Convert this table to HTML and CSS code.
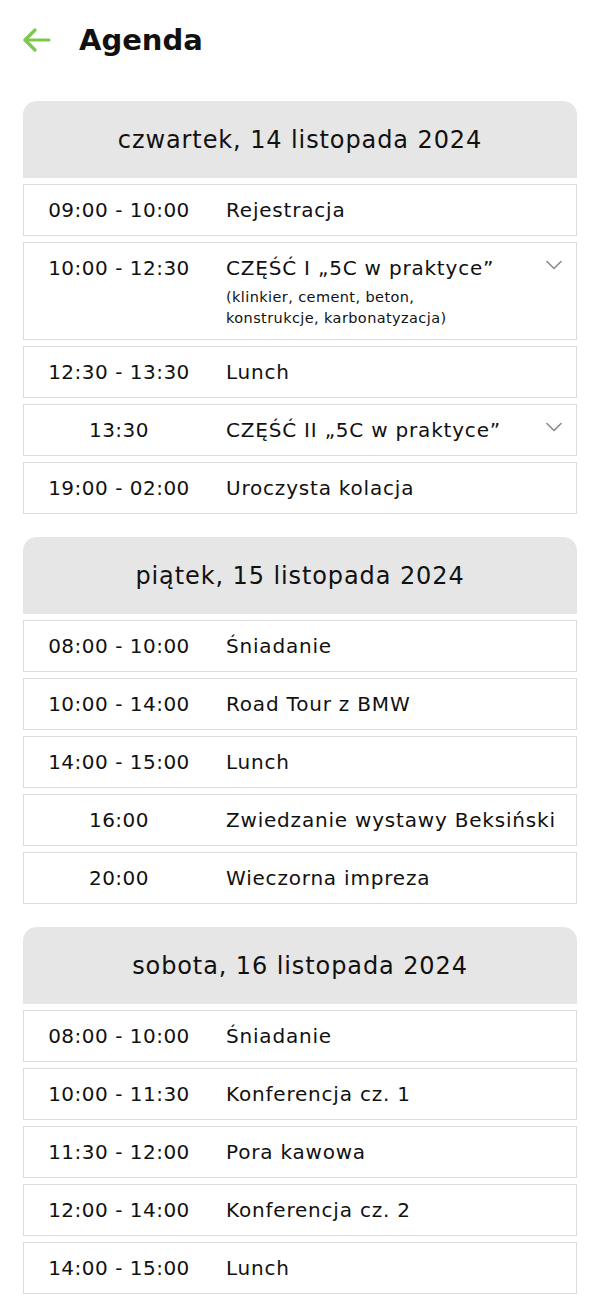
FILE: index.html
```html
<!DOCTYPE html>
<html lang="pl">
<head>
  <meta charset="UTF-8">
  <title>Agenda</title>
  <meta name="viewport" content="width=device-width, initial-scale=1.0">
  <link rel="stylesheet" href="styles.css">
</head>
<body>
  <header class="topbar">
    <a class="back" href="#" aria-label="Wstecz">
      <svg width="30" height="26" viewBox="0 0 30 26" fill="none" stroke="#7cc84f" stroke-width="3.2" stroke-linecap="round" stroke-linejoin="round">
        <path d="M27 13H3"/>
        <path d="M13 3L3 13l10 10"/>
      </svg>
    </a>
    <h1>Agenda</h1>
  </header>

  <main class="agenda">
    <section class="day">
      <h2 class="day-title">czwartek, 14 listopada 2024</h2>
      <div class="item"><span class="time">09:00 - 10:00</span><span class="what">Rejestracja</span></div>
      <div class="item has-more">
        <span class="time">10:00 - 12:30</span>
        <span class="what">CZĘŚĆ I „5C w praktyce”
          <small>(klinkier, cement, beton,<br>konstrukcje, karbonatyzacja)</small>
        </span>
        <svg class="chev" width="16" height="10" viewBox="0 0 16 10" fill="none" stroke="#8a8a8a" stroke-width="1.6" stroke-linecap="round" stroke-linejoin="round"><path d="M1 1.5l7 7 7-7"/></svg>
      </div>
      <div class="item"><span class="time">12:30 - 13:30</span><span class="what">Lunch</span></div>
      <div class="item has-more">
        <span class="time">13:30</span>
        <span class="what">CZĘŚĆ II „5C w praktyce”</span>
        <svg class="chev" width="16" height="10" viewBox="0 0 16 10" fill="none" stroke="#8a8a8a" stroke-width="1.6" stroke-linecap="round" stroke-linejoin="round"><path d="M1 1.5l7 7 7-7"/></svg>
      </div>
      <div class="item"><span class="time">19:00 - 02:00</span><span class="what">Uroczysta kolacja</span></div>
    </section>

    <section class="day">
      <h2 class="day-title">piątek, 15 listopada 2024</h2>
      <div class="item"><span class="time">08:00 - 10:00</span><span class="what">Śniadanie</span></div>
      <div class="item"><span class="time">10:00 - 14:00</span><span class="what">Road Tour z BMW</span></div>
      <div class="item"><span class="time">14:00 - 15:00</span><span class="what">Lunch</span></div>
      <div class="item"><span class="time">16:00</span><span class="what">Zwiedzanie wystawy Beksiński</span></div>
      <div class="item"><span class="time">20:00</span><span class="what">Wieczorna impreza</span></div>
    </section>

    <section class="day">
      <h2 class="day-title">sobota, 16 listopada 2024</h2>
      <div class="item"><span class="time">08:00 - 10:00</span><span class="what">Śniadanie</span></div>
      <div class="item"><span class="time">10:00 - 11:30</span><span class="what">Konferencja cz. 1</span></div>
      <div class="item"><span class="time">11:30 - 12:00</span><span class="what">Pora kawowa</span></div>
      <div class="item"><span class="time">12:00 - 14:00</span><span class="what">Konferencja cz. 2</span></div>
      <div class="item"><span class="time">14:00 - 15:00</span><span class="what">Lunch</span></div>
    </section>
  </main>
</body>
</html>
```

FILE: styles.css
```css
body {
  margin: 0;
  background: #fff;
  color: #111;
  font-family: 'DejaVu Sans', 'Noto Sans', Arial, sans-serif;
}
.topbar {
  display: flex;
  align-items: center;
  height: 80px;
  padding: 0 22px;
  box-sizing: border-box;
}
.back {
  display: flex;
  width: 30px;
  margin-right: 27px;
}
.topbar h1 {
  margin: 0;
  font-size: 29px;
  font-weight: 600;
  color: #111;
}
.agenda {
  padding: 21px 23px 0 23px;
}
.day {
  display: flex;
  flex-direction: column;
  gap: 6px;
  margin-bottom: 23px;
}
.day-title {
  margin: 0;
  height: 77px;
  display: flex;
  align-items: center;
  justify-content: center;
  background: #e6e6e6;
  border-radius: 14px 14px 0 0;
  font-size: 24px;
  font-weight: 400;
  letter-spacing: 0.9px;
  color: #111;
}
.item {
  display: flex;
  align-items: flex-start;
  min-height: 52px;
  box-sizing: border-box;
  border: 1.5px solid #dcdcdc;
  padding: 13px 0 10px 0;
  font-size: 20px;
  line-height: 24px;
  letter-spacing: 0.8px;
  position: relative;
}
.time {
  flex: 0 0 190px;
  text-align: center;
  margin-right: 12px;
  white-space: nowrap;
  letter-spacing: 0.5px;
}
.what {
  flex: 1;
  white-space: nowrap;
}
.what small {
  display: block;
  margin-top: 7px;
  font-size: 14.5px;
  line-height: 21px;
  letter-spacing: 0.4px;
}
.has-more .what {
  padding-right: 40px;
}
.chev {
  position: absolute;
  right: 14px;
  top: 17px;
}
```
